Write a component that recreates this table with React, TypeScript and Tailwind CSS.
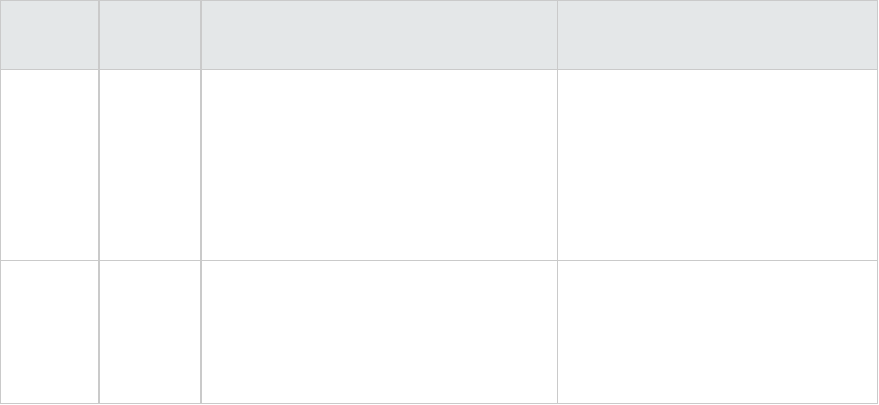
import React from "react";

const rows = [
  { h: "h-[68px]", bg: "bg-[#e4e7e8]", border: "border-b border-[#cacaca]" },
  { h: "h-[190px]", bg: "bg-white", border: "border-b border-[#cacaca]" },
  { h: "h-[142px]", bg: "bg-white", border: "" },
];

export default function App() {
  return (
    <div className="bg-white w-[879px] h-[405px] font-['Liberation_Sans',sans-serif]">
      <div className="w-[878px] border border-[#cacaca] flex flex-col">
        {rows.map((r, i) => (
          <div key={i} className={`flex ${r.bg} ${r.border}`}>
            <div className={`${r.h} w-[99px] border-r-2 border-[#cacaca]`} />
            <div className={`${r.h} w-[102px] border-r-2 border-[#cacaca]`} />
            <div className={`${r.h} w-[356px] border-r border-[#cacaca]`} />
            <div className={`${r.h} flex-1`} />
          </div>
        ))}
      </div>
    </div>
  );
}
